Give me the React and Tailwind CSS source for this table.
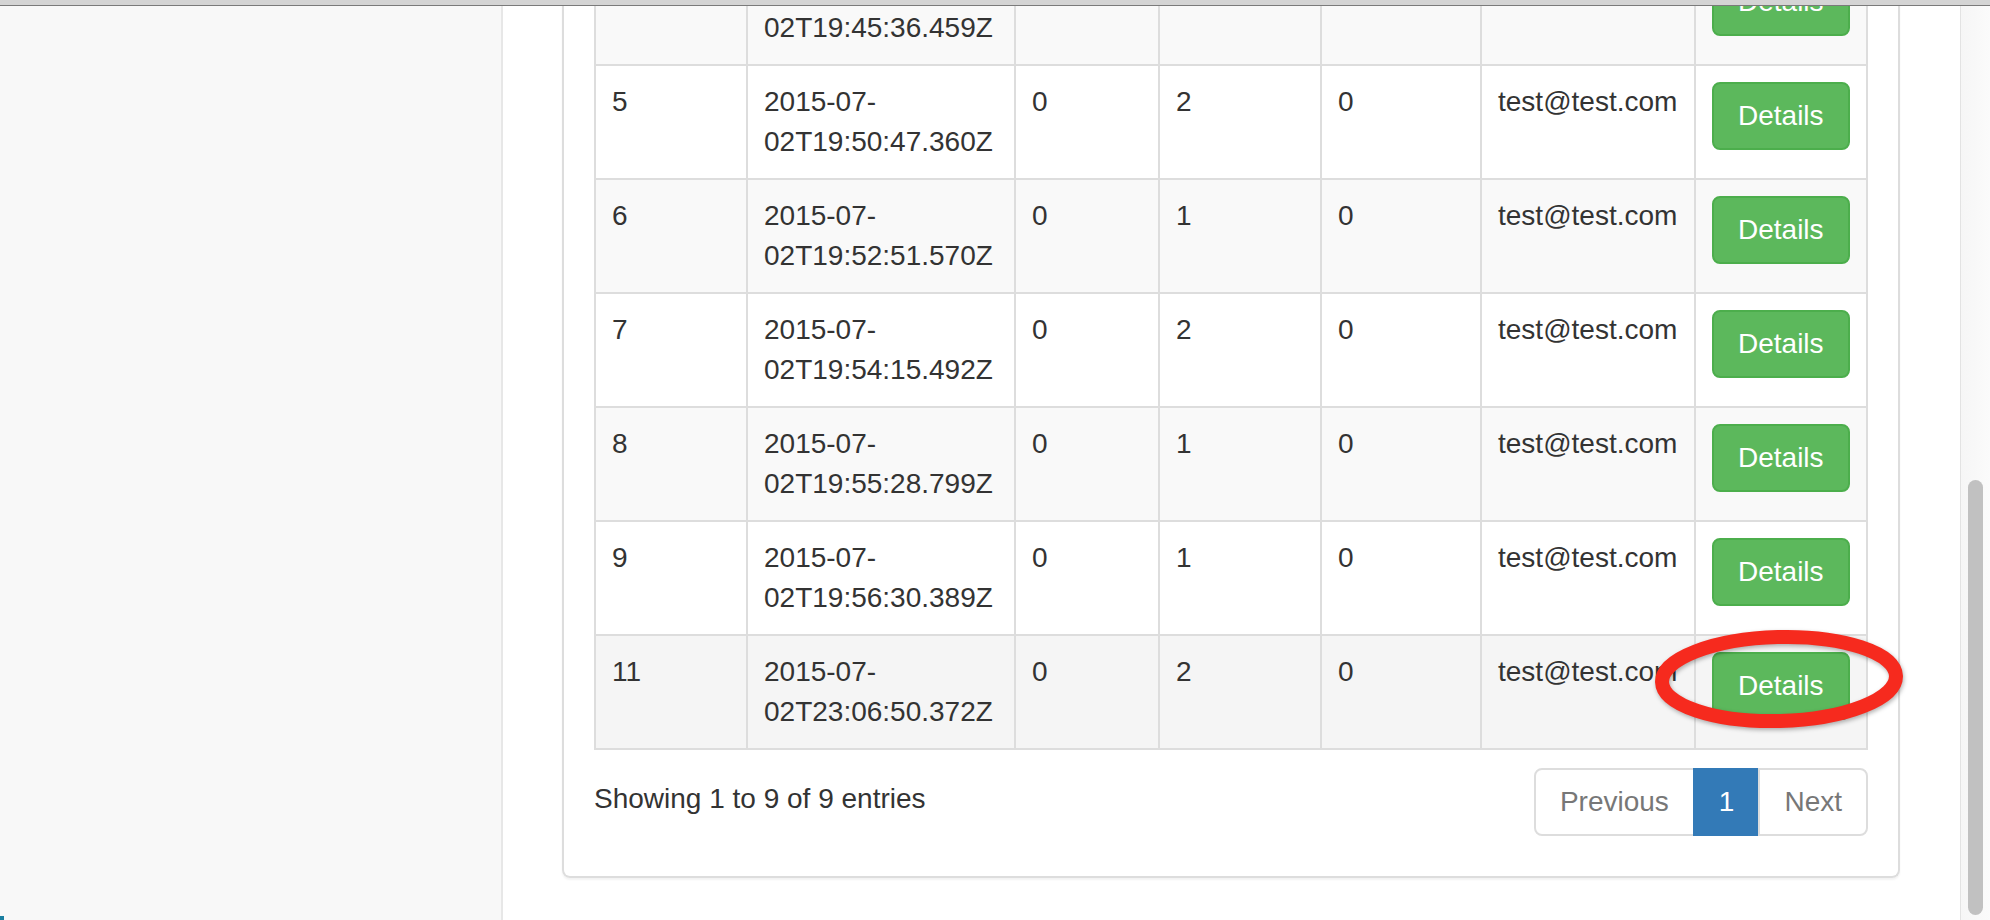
import React from 'react'

const rows = [
  { id: 4, date: '2015-07-', time: '02T19:45:36.459Z', a: 0, b: 1, c: 0, user: 'test@test.com', bg: 'bg-[#f9f9f9]' },
  { id: 5, date: '2015-07-', time: '02T19:50:47.360Z', a: 0, b: 2, c: 0, user: 'test@test.com', bg: 'bg-white' },
  { id: 6, date: '2015-07-', time: '02T19:52:51.570Z', a: 0, b: 1, c: 0, user: 'test@test.com', bg: 'bg-[#f9f9f9]' },
  { id: 7, date: '2015-07-', time: '02T19:54:15.492Z', a: 0, b: 2, c: 0, user: 'test@test.com', bg: 'bg-white' },
  { id: 8, date: '2015-07-', time: '02T19:55:28.799Z', a: 0, b: 1, c: 0, user: 'test@test.com', bg: 'bg-[#f9f9f9]' },
  { id: 9, date: '2015-07-', time: '02T19:56:30.389Z', a: 0, b: 1, c: 0, user: 'test@test.com', bg: 'bg-white' },
  { id: 11, date: '2015-07-', time: '02T23:06:50.372Z', a: 0, b: 2, c: 0, user: 'test@test.com', bg: 'bg-[#f5f5f5]' },
]

const cell = 'border-r-2 border-[#ddd] p-[16px]'

function Row({ row }) {
  return (
    <div className={`grid grid-cols-[152px_268px_144px_162px_160px_214px_172px] border-b-2 border-[#ddd] ${row.bg}`}>
      <div className={cell}>{row.id}</div>
      <div className={cell}>
        <div>{row.date}</div>
        <div>{row.time}</div>
      </div>
      <div className={cell}>{row.a}</div>
      <div className={cell}>{row.b}</div>
      <div className={cell}>{row.c}</div>
      <div className={`${cell} whitespace-nowrap`}>{row.user}</div>
      <div className={cell}>
        <button className="h-[68px] px-[24px] rounded-[8px] border-2 border-[#4cae4c] bg-[#5cb85c] text-white leading-[40px]">
          Details
        </button>
      </div>
    </div>
  )
}

export default function App() {
  return (
    <div
      className="relative h-screen w-full flex flex-col overflow-hidden bg-white text-[#333] text-[28px] leading-[40px]"
      style={{ fontFamily: '"Liberation Sans", Arial, sans-serif' }}
    >
      <div className="h-[6px] shrink-0 bg-[#d4d4d4] border-b border-[#7a7a7a]" />

      <div className="flex flex-1 min-h-0">
        <aside className="w-[503px] shrink-0 bg-[#f8f8f8] border-r-2 border-[#e7e7e7]" />

        <main className="flex-1 min-w-0 overflow-hidden pl-[59px] pr-[60px]">
          <div className="border-x-2 border-b-2 border-[#ddd] rounded-b-[8px] px-[30px] pb-[40px] shadow-[0_2px_2px_rgba(0,0,0,0.05)]">
            <div className="-mt-[54px] border-l-2 border-[#ddd]">
              {rows.map((r) => (
                <Row key={r.id} row={r} />
              ))}
            </div>

            <div className="mt-[18px] flex items-start justify-between">
              <div className="pt-[11px]">Showing 1 to 9 of 9 entries</div>
              <div className="flex">
                <span className="px-[24px] py-[12px] border-2 border-[#ddd] rounded-l-[8px] text-[#777] bg-white">Previous</span>
                <span className="-ml-[2px] px-[24px] py-[12px] border-2 border-[#337ab7] bg-[#337ab7] text-white">1</span>
                <span className="-ml-[2px] px-[24px] py-[12px] border-2 border-[#ddd] rounded-r-[8px] text-[#777] bg-white">Next</span>
              </div>
            </div>
          </div>
        </main>

        <div className="w-[30px] shrink-0 border-l border-[#e3e3e3] bg-gradient-to-r from-[#f6f6f6] to-[#fbfbfb] pt-[474px] pl-[7px]">
          <div className="w-[15px] h-[435px] rounded-full bg-[#c1c1c1]" />
        </div>
      </div>

      {/* annotation drawn over the last Details button */}
      <svg
        className="absolute left-[1640px] top-[620px] drop-shadow-[1px_2px_2px_rgba(0,0,0,0.3)] pointer-events-none"
        width="280"
        height="120"
        viewBox="0 0 280 120"
      >
        <ellipse
          cx="139"
          cy="59"
          rx="117"
          ry="42"
          fill="none"
          stroke="#f62a1e"
          strokeWidth="14"
          transform="rotate(-1.5 139 59)"
        />
      </svg>

      <span className="absolute left-0 bottom-0 w-[4px] h-[4px] bg-[#1a7fa0]" />
    </div>
  )
}
